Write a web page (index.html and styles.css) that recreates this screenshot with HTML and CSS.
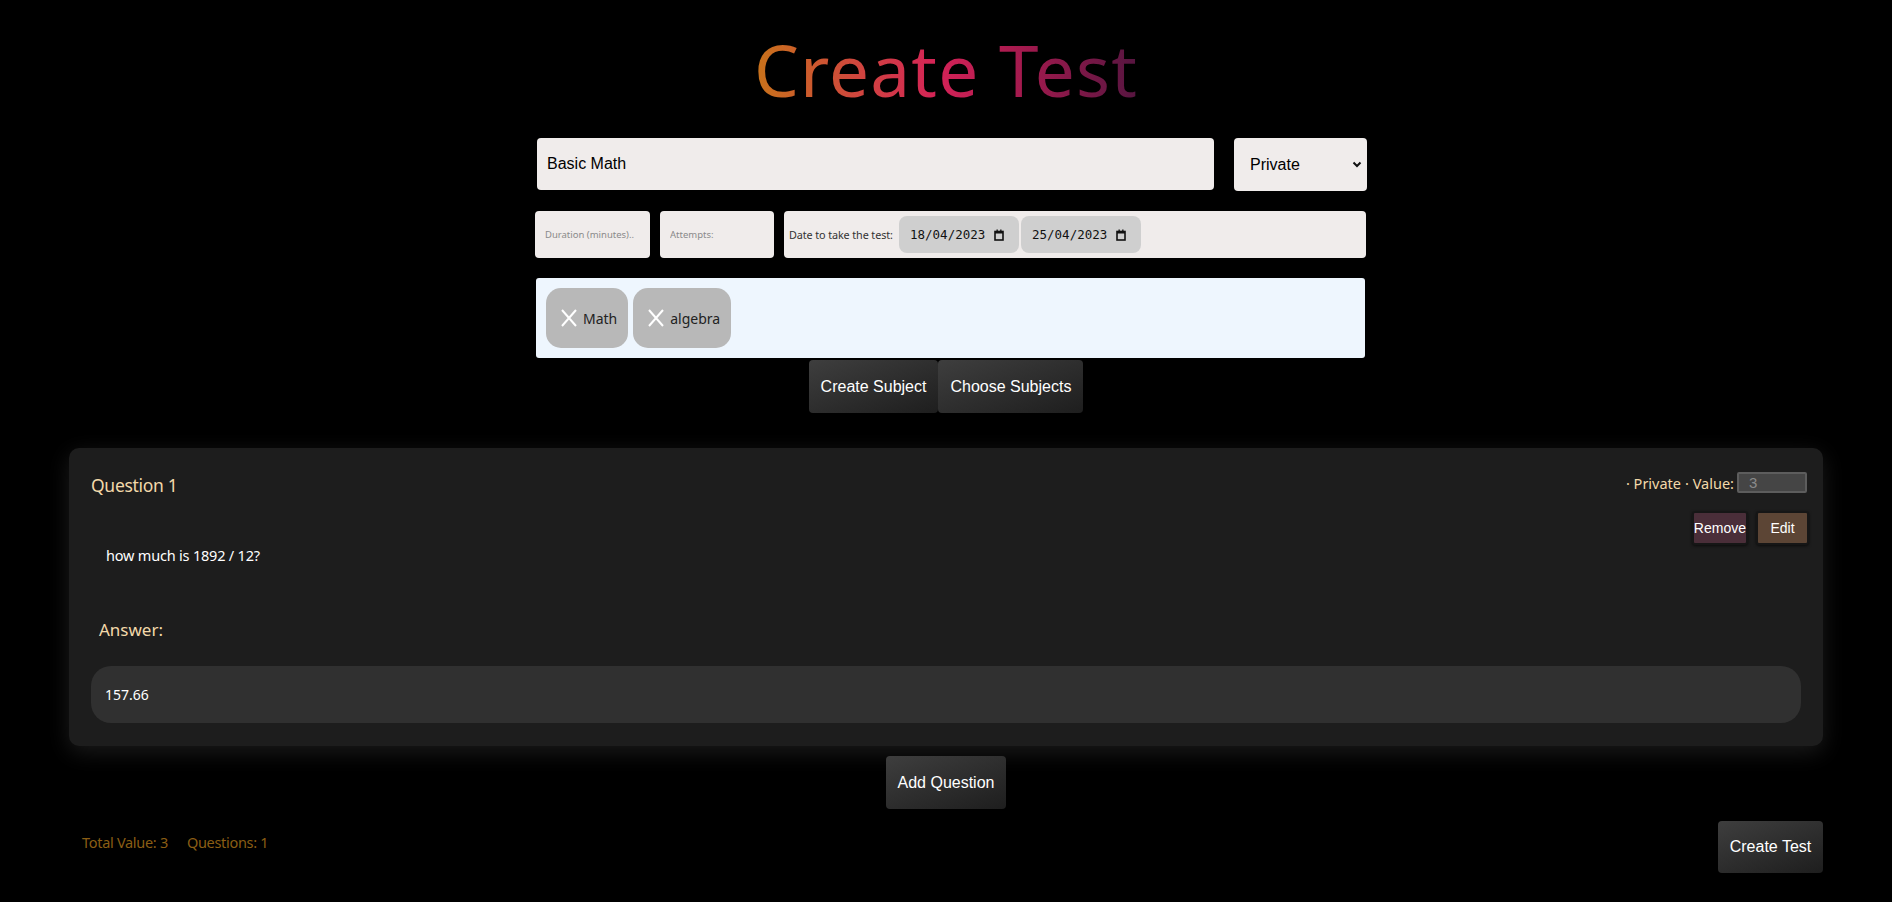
FILE: index.html
```html
<!DOCTYPE html>
<html lang="en">
<head>
<meta charset="utf-8">
<title>Create Test</title>
<link rel="stylesheet" href="styles.css">
</head>
<body>
<main class="page">
  <h1 class="title">Create Test</h1>

  <section class="form">
    <div class="row-top">
      <input class="name-input" type="text" value="Basic Math">
      <div class="select-wrap">
        <select class="privacy-select">
          <option>Private</option>
          <option>Public</option>
        </select>
        <svg class="chevron" width="10" height="7" viewBox="0 0 10 7"><path d="M1.5 1.5 L5 5 L8.5 1.5" fill="none" stroke="#111" stroke-width="2"/></svg>
      </div>
    </div>

    <div class="row-meta">
      <input class="small-input duration" type="text" placeholder="Duration (minutes)..">
      <input class="small-input attempts" type="text" placeholder="Attempts:">
      <div class="date-box">
        <span class="date-label">Date to take the test:</span>
        <div class="date-field">
          <span class="date-text">18/04/2023</span>
          <svg class="cal" width="10" height="12" viewBox="0 0 10 12"><rect x="1" y="2.5" width="8" height="8.5" fill="none" stroke="#111" stroke-width="1.6"/><rect x="1" y="2" width="8" height="2.5" fill="#111"/><rect x="2.5" y="0.5" width="1.3" height="2" fill="#111"/><rect x="6.2" y="0.5" width="1.3" height="2" fill="#111"/></svg>
        </div>
        <div class="date-field">
          <span class="date-text">25/04/2023</span>
          <svg class="cal" width="10" height="12" viewBox="0 0 10 12"><rect x="1" y="2.5" width="8" height="8.5" fill="none" stroke="#111" stroke-width="1.6"/><rect x="1" y="2" width="8" height="2.5" fill="#111"/><rect x="2.5" y="0.5" width="1.3" height="2" fill="#111"/><rect x="6.2" y="0.5" width="1.3" height="2" fill="#111"/></svg>
        </div>
      </div>
    </div>

    <div class="subjects">
      <div class="chip">
        <svg class="chip-x" width="16" height="18" viewBox="0 0 16 18"><path d="M1 1 L15 17 M15 1 L1 17" stroke="#fff" stroke-width="2" fill="none"/></svg>
        <span class="chip-text">Math</span>
      </div>
      <div class="chip">
        <svg class="chip-x" width="16" height="18" viewBox="0 0 16 18"><path d="M1 1 L15 17 M15 1 L1 17" stroke="#fff" stroke-width="2" fill="none"/></svg>
        <span class="chip-text">algebra</span>
      </div>
    </div>
  </section>

  <div class="subject-actions">
    <button class="dark-btn">Create Subject</button>
    <button class="dark-btn">Choose Subjects</button>
  </div>

  <article class="card">
    <div class="card-head">
      <h2 class="q-title">Question 1</h2>
      <div class="q-side">
        <div class="q-meta">
          <span class="meta-item">· Private</span>
          <span class="meta-item">· Value:</span>
          <input class="value-input" type="text" value="3">
        </div>
        <div class="q-actions">
          <button class="act-btn remove">Remove</button>
          <button class="act-btn edit">Edit</button>
        </div>
      </div>
    </div>
    <p class="q-text">how much is 1892 / 12?</p>
    <h3 class="answer-label">Answer:</h3>
    <div class="answer-box">157.66</div>
  </article>

  <div class="add-row">
    <button class="dark-btn add-btn">Add Question</button>
  </div>

  <footer class="footer">
    <div class="totals">
      <span>Total Value: 3</span>
      <span>Questions: 1</span>
    </div>
    <button class="dark-btn create-btn">Create Test</button>
  </footer>
</main>
</body>
</html>
```

FILE: styles.css
```css
* { box-sizing: border-box; }

html, body {
  margin: 0;
  background: #000;
}

body {
  font-family: "Noto Sans", "Open Sans", sans-serif;
  color: #fff;
}

.page {
  display: flex;
  flex-direction: column;
  min-height: 902px;
}

.title {
  margin: 0;
  padding-top: 22px;
  align-self: center;
  font-size: 71px;
  font-weight: 400;
  line-height: 95px;
  background: linear-gradient(90deg, #c8731a 0%, #d0443f 28%, #d42257 48%, #a31a4e 70%, #561540 100%);
  -webkit-background-clip: text;
  background-clip: text;
  color: transparent;
  letter-spacing: 1.2px;
}

.form {
  width: 832px;
  margin-left: calc(50% - 411px);
  display: flex;
  flex-direction: column;
}

.row-top {
  margin-top: 21px;
  display: flex;
  height: 52px;
}

.name-input {
  width: 677px;
  height: 52px;
  margin-left: 2px;
  border: none;
  border-radius: 4px;
  background: #f0eceb;
  padding: 0 10px;
  font-family: "Liberation Sans", Arial, sans-serif;
  font-size: 16px;
  color: #000;
  outline: none;
}

.select-wrap {
  position: relative;
  width: 133px;
  height: 53px;
  margin-left: 20px;
}

.privacy-select {
  appearance: none;
  -webkit-appearance: none;
  width: 100%;
  height: 100%;
  border: none;
  border-radius: 4px;
  background: #f0eceb;
  padding: 0 16px;
  font-family: "Liberation Sans", Arial, sans-serif;
  font-size: 16px;
  color: #000;
  outline: none;
}

.chevron {
  position: absolute;
  right: 5px;
  top: 23px;
  pointer-events: none;
}

.row-meta {
  margin-top: 21px;
  display: flex;
  gap: 10px;
  height: 47px;
}

.small-input {
  height: 47px;
  border: none;
  border-radius: 4px;
  background: #f0eceb;
  padding: 0 10px;
  font-family: "Noto Sans", sans-serif;
  font-size: 9.5px;
  color: #333;
  outline: none;
}

.small-input::placeholder { color: #8a8a8a; }

.duration { width: 115px; }
.attempts { width: 114px; }

.date-box {
  width: 582px;
  height: 47px;
  border-radius: 4px;
  background: #f0eceb;
  display: flex;
  align-items: center;
  padding-left: 5px;
  gap: 2px;
}

.date-label {
  width: 108px;
  font-size: 10.8px;
  color: #333;
  letter-spacing: -0.1px;
  white-space: nowrap;
}

.date-field {
  width: 120px;
  height: 37px;
  border-radius: 8px;
  background: #cfcfcf;
  display: flex;
  align-items: center;
  padding-left: 11px;
  gap: 9px;
}

.date-text {
  font-family: "DejaVu Sans Mono", "Liberation Mono", monospace;
  font-size: 12.5px;
  color: #111;
}

.cal { flex: none; }

.subjects {
  margin-top: 20px;
  margin-left: 1px;
  width: 829px;
  height: 80px;
  background: #eef6fe;
  border-radius: 3px;
  padding: 10px;
  display: flex;
  gap: 5px;
}

.chip {
  height: 60px;
  border-radius: 15px;
  background: #b8b8b8;
  display: flex;
  align-items: center;
  padding: 0 11px 0 15px;
  gap: 6px;
}

.chip-x { flex: none; }

.chip-text {
  font-size: 14px;
  color: #222;
}

.subject-actions {
  margin-top: 2px;
  display: flex;
  justify-content: center;
}

.dark-btn {
  height: 53px;
  padding: 0 12px;
  border: none;
  border-radius: 4px;
  background: linear-gradient(160deg, #3e3e3e 0%, #1e1e1e 100%);
  color: #fff;
  font-family: "Liberation Sans", Arial, sans-serif;
  font-size: 16px;
  cursor: pointer;
}

.card {
  margin: 35px 69px 0;
  height: 298px;
  background: #1d1d1d;
  border-radius: 10px;
  padding: 24px 22px 23px 22px;
  box-shadow: 0 6px 22px rgba(50, 50, 50, 0.55);
  display: flex;
  flex-direction: column;
}

.card-head {
  display: flex;
  justify-content: space-between;
  align-items: flex-start;
}

.q-title {
  margin: 0;
  font-size: 17.5px;
  font-weight: 400;
  color: #f3d9aa;
  line-height: 26px;
  letter-spacing: -0.3px;
}

.q-side {
  display: flex;
  flex-direction: column;
  align-items: flex-end;
  margin-right: -8px;
}

.q-meta {
  display: flex;
  align-items: center;
  gap: 4px;
  margin-right: 2px;
  height: 21px;
}

.meta-item {
  font-size: 14.5px;
  color: #f3d9aa;
}

.value-input {
  width: 70px;
  height: 21px;
  margin-left: -1px;
  background: #454545;
  border: 2px solid #5d5d5d;
  border-radius: 2px;
  color: #8a8a8a;
  font-family: "Liberation Sans", Arial, sans-serif;
  font-size: 15px;
  padding: 0 10px;
  outline: none;
}

.q-actions {
  margin-top: 18px;
  display: flex;
  gap: 8px;
}

.act-btn {
  height: 34px;
  min-width: 53px;
  padding: 0;
  border: 2px solid #161616;
  border-radius: 3px;
  color: #fff;
  font-family: "Liberation Sans", Arial, sans-serif;
  font-size: 14px;
  font-weight: 400;
  box-shadow: 0 1px 3px rgba(0, 0, 0, 0.6);
  cursor: pointer;
}

.act-btn.remove { background: #4a2e39; }
.act-btn.edit { background: #5c4535; }

.q-text {
  margin: -1px 0 0 15px;
  font-size: 14.5px;
  line-height: 22px;
  letter-spacing: -0.2px;
  color: #fff;
}

.answer-label {
  margin: 52px 0 0 8px;
  font-size: 17px;
  font-weight: 400;
  line-height: 24px;
  color: #f3d9aa;
}

.answer-box {
  margin-top: 24px;
  height: 57px;
  border-radius: 20px;
  background: #303030;
  padding-left: 14px;
  display: flex;
  align-items: center;
  font-size: 14px;
  color: #fff;
}

.add-row {
  margin-top: 10px;
  display: flex;
  justify-content: center;
}

.add-btn { width: 120px; padding: 0; }

.footer {
  margin: 12px 69px 0 82px;
  display: flex;
  justify-content: space-between;
  align-items: flex-start;
}

.totals {
  margin-top: 11px;
  display: flex;
  gap: 19px;
  font-size: 14.5px;
  color: #8b5e14;
  letter-spacing: -0.3px;
}

.create-btn {
  width: 105px;
  height: 52px;
  padding: 0;
}
```
